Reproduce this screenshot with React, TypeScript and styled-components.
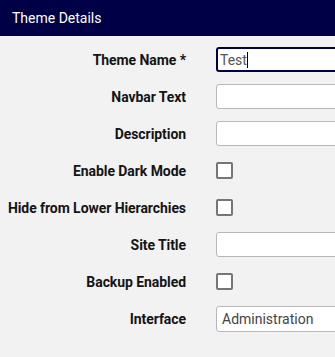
import React from 'react';
import styled, { createGlobalStyle } from 'styled-components';

const GlobalStyle = createGlobalStyle`
  html, body {
    margin: 0;
    padding: 0;
    background: #f2f2f2;
    overflow: hidden;
  }
  body {
    font-family: Roboto, "Liberation Sans", sans-serif;
  }
`;

type Field = { label: string; kind: 'text' | 'check' | 'select'; value?: string; focused?: boolean };

const FIELDS: Field[] = [
  { label: 'Theme Name *', kind: 'text', value: 'Test', focused: true },
  { label: 'Navbar Text', kind: 'text' },
  { label: 'Description', kind: 'text' },
  { label: 'Enable Dark Mode', kind: 'check' },
  { label: 'Hide from Lower Hierarchies', kind: 'check' },
  { label: 'Site Title', kind: 'text' },
  { label: 'Backup Enabled', kind: 'check' },
  { label: 'Interface', kind: 'select', value: 'Administration' },
];

const App = () => {
  return (
    <>
      <GlobalStyle />
      <Panel>
        <Header>Theme Details</Header>
        <Form>
          {FIELDS.map((f) => (
            <Row key={f.label}>
              <Label>{f.label}</Label>
              {f.kind === 'check' && <CheckBox />}
              {f.kind === 'text' && (
                <TextBox focused={!!f.focused}>
                  {f.value}
                  {f.focused && <Caret />}
                </TextBox>
              )}
              {f.kind === 'select' && <SelectBox>{f.value}</SelectBox>}
            </Row>
          ))}
        </Form>
      </Panel>
    </>
  );
};

export default App;

const Panel = styled.div`
  width: 335px;
  height: 357px;
  background: #f2f2f2;
  overflow: hidden;
`;

const Header = styled.div`
  height: 36px;
  display: flex;
  align-items: center;
  padding-left: 12px;
  background: #000046;
  color: #ffffff;
  font-size: 14px;
`;

const Form = styled.div`
  display: flex;
  flex-direction: column;
  gap: 12px;
  padding-top: 11px;
`;

const Row = styled.div`
  display: grid;
  grid-template-columns: 186px 240px;
  column-gap: 30px;
  align-items: center;
  height: 25px;
`;

const Label = styled.div`
  text-align: right;
  font-size: 14px;
  font-weight: 700;
  letter-spacing: -0.07px;
  color: #141414;
  white-space: nowrap;
`;

const TextBox = styled.div<{ focused: boolean }>`
  position: relative;
  box-sizing: border-box;
  height: 25px;
  display: flex;
  align-items: center;
  padding-left: ${({ focused }) => (focused ? '2px' : '3px')};
  background: #ffffff;
  border: ${({ focused }) => (focused ? '2px solid #000046' : '1px solid #b8b8b8')};
  border-radius: 3px;
  font-size: 14px;
  color: #555555;
`;

const Caret = styled.span`
  display: inline-block;
  width: 1px;
  height: 16px;
  margin-left: 0;
  background: #000000;
`;

const SelectBox = styled.div`
  box-sizing: border-box;
  height: 26px;
  display: flex;
  align-items: center;
  padding-left: 5px;
  background: #ffffff;
  border: 1px solid #b8b8b8;
  border-radius: 3px;
  font-size: 14px;
  color: #444444;
`;

const CheckBox = styled.div`
  box-sizing: border-box;
  width: 17px;
  height: 17px;
  background: #ffffff;
  border: 2px solid #767676;
  border-radius: 2px;
`;
